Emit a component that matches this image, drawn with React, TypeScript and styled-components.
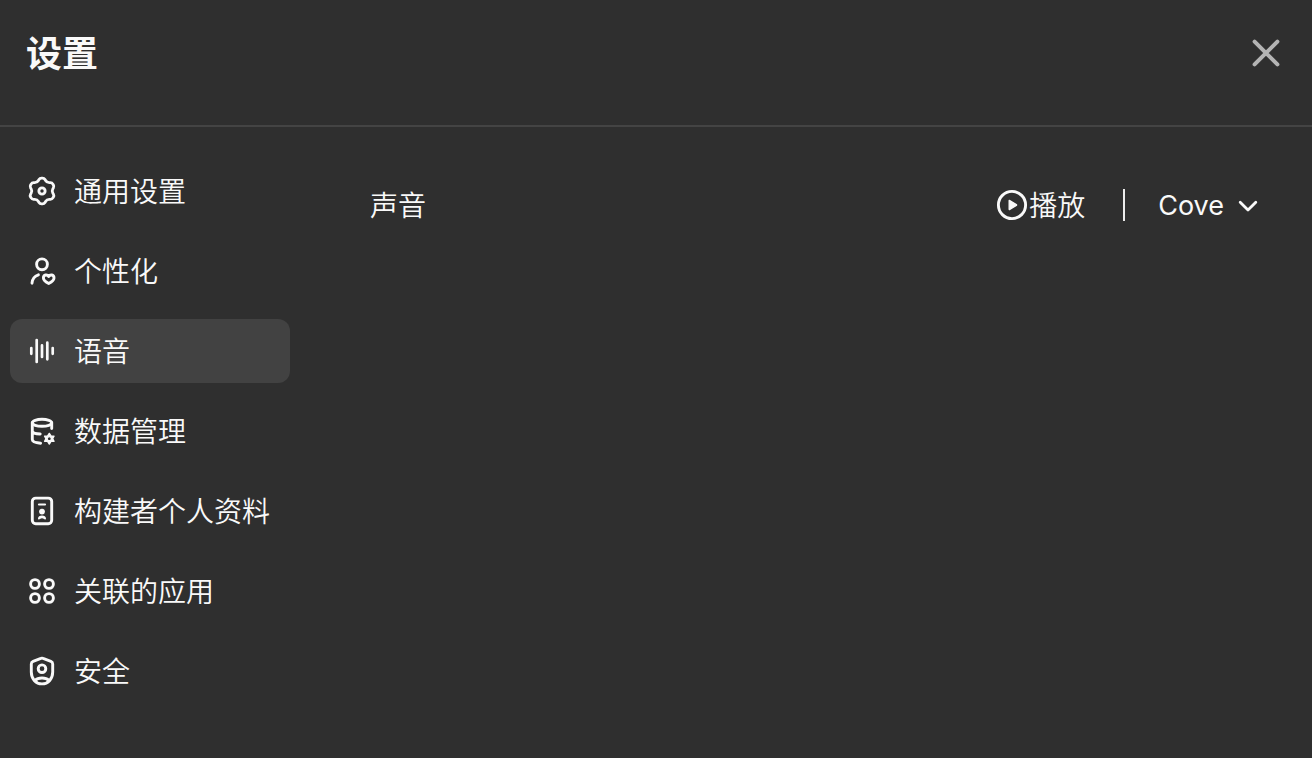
import React, { useState } from "react";
import styled, { createGlobalStyle } from "styled-components";

const GlobalStyle = createGlobalStyle`
  *, *::before, *::after { box-sizing: border-box; }
  body {
    margin: 0;
    background: #2f2f2f;
    color: #f9f9f9;
    font-family: Inter, "Noto Sans CJK SC", sans-serif;
    font-size: 28px;
    font-weight: 350;
    line-height: 40px;
  }
  button, select { font: inherit; color: inherit; }
`;

const Dialog = styled.section`
  display: flex;
  flex-direction: column;
  min-height: 100vh;
  background: #2f2f2f;
`;

const Header = styled.header`
  display: flex;
  align-items: center;
  justify-content: space-between;
  padding: 28px 28px 47px 26px;
  border-bottom: 2px solid #444444;
`;

const Title = styled.h2`
  margin: 0;
  padding-top: 2px;
  font-size: 36px;
  line-height: 48px;
  font-weight: 600;
`;

const CloseButton = styled.button`
  display: flex;
  padding: 0;
  border: 0;
  background: none;
  color: #b4b4b4;
  cursor: pointer;
`;

const Body = styled.div`
  display: flex;
  flex: 1;
  padding: 32px 52px 32px 10px;
  gap: 80px;
`;

const Nav = styled.nav`
  display: flex;
  flex-direction: column;
  flex: none;
  width: 280px;
  gap: 16px;
`;

const NavItem = styled.button<{ $active: boolean }>`
  display: flex;
  align-items: center;
  gap: 14px;
  height: 64px;
  padding: 0 0 0 14px;
  border: 0;
  border-radius: 12px;
  background: ${(p) => (p.$active ? "#424242" : "transparent")};
  text-align: left;
  white-space: nowrap;
  cursor: pointer;
`;

const Text = styled.span`
  padding-top: 2px;
`;

const Icon = styled.svg`
  flex: none;
  fill: none;
  stroke: currentColor;
  stroke-linecap: round;
  stroke-linejoin: round;
`;

const Panel = styled.main`
  flex: 1;
  min-width: 0;
`;

const SettingRow = styled.div`
  display: flex;
  align-items: center;
  justify-content: space-between;
  min-height: 64px;
  margin-top: 14px;
`;

const Controls = styled.div`
  display: flex;
  align-items: center;
  gap: 33px;
`;

const PlayButton = styled.button`
  display: flex;
  align-items: center;
  gap: 1px;
  padding: 0 5px 0 0;
  border: 0;
  background: none;
  cursor: pointer;
`;

const Divider = styled.span`
  width: 2px;
  height: 32px;
  background: #ececec;
`;

const SelectWrap = styled.div`
  display: grid;
  align-items: center;
  justify-items: end;

  > * { grid-area: 1 / 1; }
  > svg { pointer-events: none; }
`;

const Select = styled.select`
  appearance: none;
  field-sizing: content;
  padding: 2px 36px 0 0;
  border: 0;
  background: none;
  font-size: 27px;
  font-weight: 400;
  cursor: pointer;

  option { background: #2f2f2f; }
`;

const icons: Record<string, React.ReactNode> = {
  general: (
    <g transform="translate(18 18) scale(1.43) translate(-12 -12)" strokeWidth="2">
      <path d="M11.644 3C10.935 3 10.279 3.375 9.92 3.986L9.496 4.706C8.962 5.615 7.989 6.176 6.935 6.185L6.1 6.192C5.391 6.197 4.738 6.578 4.384 7.192L4.028 7.808C3.673 8.422 3.67 9.178 4.02 9.794L4.432 10.521C4.951 11.439 4.951 12.561 4.432 13.479L4.02 14.206C3.67 14.822 3.673 15.578 4.028 16.192L4.384 16.808C4.738 17.422 5.391 17.803 6.1 17.808L6.935 17.815C7.989 17.824 8.962 18.385 9.496 19.294L9.92 20.014C10.279 20.625 10.935 21 11.644 21H12.356C13.065 21 13.721 20.625 14.08 20.014L14.504 19.294C15.038 18.385 16.011 17.824 17.065 17.815L17.9 17.808C18.609 17.803 19.262 17.422 19.616 16.808L19.972 16.192C20.327 15.578 20.33 14.822 19.98 14.206L19.569 13.479C19.049 12.561 19.049 11.439 19.569 10.521L19.98 9.794C20.33 9.178 20.327 8.422 19.972 7.808L19.616 7.192C19.262 6.578 18.609 6.197 17.9 6.192L17.065 6.185C16.011 6.176 15.038 5.615 14.504 4.706L14.08 3.986C13.721 3.375 13.065 3 12.356 3Z" />
      <circle cx="12" cy="12" r="2.2" />
    </g>
  ),
  personal: (
    <>
      <circle cx="18" cy="11.3" r="5.4" />
      <path d="M8 30.2C8.3 26 10.8 23 14.4 21.8" />
      <path d="M24.7 23.6C23.4 21.2 19.4 21.4 19.4 25C19.4 27.6 22.5 29.4 24.7 30.5C26.9 29.4 30 27.6 30 25C30 21.4 26 21.2 24.7 23.6Z" />
    </>
  ),
  voice: (
    <path
      strokeWidth="2.7"
      d="M7.3 15V20.8M12.7 7.1V29M18 12.4V24M23.3 9.7V26.3M28.7 15V20.8"
    />
  ),
  data: (
    <>
      <ellipse cx="18" cy="9.8" rx="9.7" ry="3.5" />
      <path d="M8.3 9.8V26.6C8.3 28.6 12 29.9 16.6 30.2M27.7 9.8V15.6M8.3 18.2C8.8 19.8 12 20.8 16.2 21" />
      <path
        fill="currentColor"
        fillRule="evenodd"
        strokeWidth="1.4"
        d="M25.3 20.4L27 23L30 23.1L28.6 25.7L30 28.3L27 28.4L25.3 31L23.6 28.4L20.6 28.3L22 25.7L20.6 23.1L23.6 23ZM25.3 23.6A2.1 2.1 0 1 0 25.3 27.8A2.1 2.1 0 1 0 25.3 23.6Z"
      />
    </>
  ),
  builder: (
    <>
      <rect x="8.3" y="5.1" width="19.4" height="25.6" rx="3.4" />
      <path strokeWidth="2.2" d="M15 11.5H21" />
      <circle cx="18" cy="18.6" r="2.9" fill="currentColor" stroke="none" />
      <path
        fill="currentColor"
        stroke="none"
        d="M14 25.6C14 23.6 15.8 22.4 18 22.4C20.2 22.4 22 23.6 22 25.6C22 26.8 20.6 26.8 20 26.1C19 24.9 17 24.9 16 26.1C15.4 26.8 14 26.8 14 25.6Z"
      />
    </>
  ),
  apps: (
    <>
      <circle cx="11" cy="11" r="4.4" />
      <circle cx="25" cy="11" r="4.4" />
      <circle cx="11" cy="25" r="4.4" />
      <circle cx="25" cy="25" r="4.4" />
    </>
  ),
  security: (
    <>
      <path d="M16.9 5.4Q18 4.9 19.1 5.4L26.9 8.3Q28.7 9 28.7 10.9V19C28.7 25.6 24.4 30.9 18 30.9C11.6 30.9 7.3 25.6 7.3 19V10.9Q7.3 9 9.1 8.3Z" />
      <circle cx="18" cy="15.7" r="3.8" />
      <path d="M11.3 27.3C14 24.2 22 24.2 24.7 27.3" />
    </>
  ),
};

const sections = [
  { id: "general", label: "通用设置" },
  { id: "personal", label: "个性化" },
  { id: "voice", label: "语音" },
  { id: "data", label: "数据管理" },
  { id: "builder", label: "构建者个人资料" },
  { id: "apps", label: "关联的应用" },
  { id: "security", label: "安全" },
];

export default function App() {
  const [active, setActive] = useState("voice");

  return (
    <>
      <GlobalStyle />
      <Dialog aria-labelledby="settings-title">
        <Header>
          <Title id="settings-title">设置</Title>
          <CloseButton aria-label="关闭">
            <Icon width="36" height="36" viewBox="0 0 36 36" strokeWidth="4" aria-hidden="true">
              <path d="M6.6 6.6L29.4 29.4M29.4 6.6L6.6 29.4" />
            </Icon>
          </CloseButton>
        </Header>
        <Body>
          <Nav>
            {sections.map(({ id, label }) => (
              <NavItem
                key={id}
                $active={id === active}
                aria-current={id === active ? "page" : undefined}
                onClick={() => setActive(id)}
              >
                <Icon width="36" height="36" viewBox="0 0 36 36" strokeWidth="2.9" aria-hidden="true">
                  {icons[id]}
                </Icon>
                <Text>{label}</Text>
              </NavItem>
            ))}
          </Nav>
          <Panel>
            <SettingRow>
              <Text as="label" htmlFor="voice-select">声音</Text>
              <Controls>
                <PlayButton>
                  <Icon width="32" height="32" viewBox="0 0 32 32" strokeWidth="2.9" aria-hidden="true">
                    <circle cx="16" cy="16" r="13.6" />
                    <path
                      fill="currentColor"
                      strokeWidth="1.4"
                      d="M13.2 11.8V20.2Q13.2 20.7 13.7 20.4L20.3 16.5Q20.9 16 20.3 15.5L13.7 11.6Q13.2 11.3 13.2 11.8Z"
                    />
                  </Icon>
                  <Text>播放</Text>
                </PlayButton>
                <Divider />
                <SelectWrap>
                  <Select id="voice-select" defaultValue="Cove">
                    <option>Cove</option>
                  </Select>
                  <Icon width="24" height="24" viewBox="0 0 24 24" strokeWidth="2.8" aria-hidden="true">
                    <path d="M4.2 9.2L12 17L19.8 9.2" />
                  </Icon>
                </SelectWrap>
              </Controls>
            </SettingRow>
          </Panel>
        </Body>
      </Dialog>
    </>
  );
}
